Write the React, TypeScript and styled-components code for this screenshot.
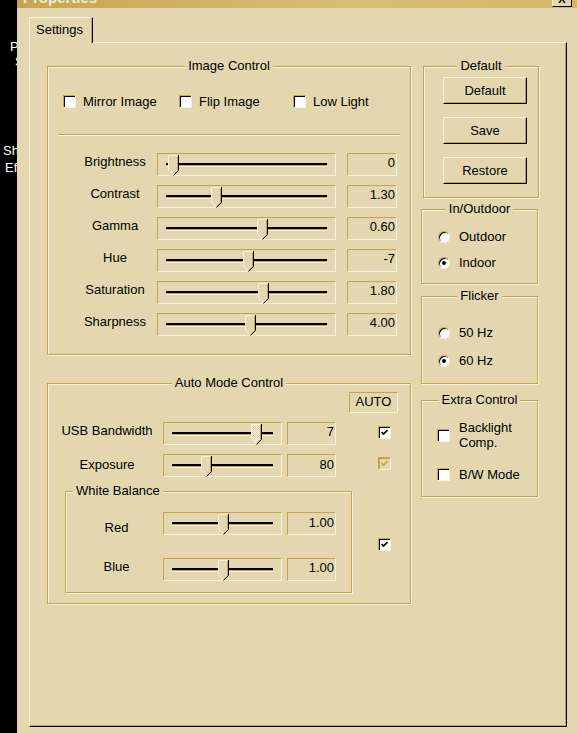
import styled, { createGlobalStyle } from 'styled-components';

const C = {
  face: '#E4D7B0',
  gold: '#C2A452',
  light: '#F8F1DC',
  dark: '#000000',
};

const GlobalStyle = createGlobalStyle`
  html, body {
    margin: 0;
    padding: 0;
    background: #000;
  }
  body {
    font-family: "Liberation Sans", Arial, sans-serif;
    font-size: 13px;
    line-height: 15px;
    color: #000;
    overflow: hidden;
  }
`;

const Screen = styled.div`
  display: flex;
  width: 577px;
  height: 733px;
  overflow: hidden;
  background: #000;
`;

const Desktop = styled.div`
  width: 17px;
  flex: none;
  overflow: hidden;
  padding-top: 39px;
  color: #fff;
  white-space: nowrap;
`;

const DesktopLabel = styled.div<{ $indent: number; $gap?: number }>`
  padding-left: ${(p) => p.$indent}px;
  margin-top: ${(p) => p.$gap ?? 0}px;
`;

const Window = styled.div`
  flex: 1;
  min-width: 0;
  display: flex;
  flex-direction: column;
  background: ${C.face};
`;

const TitleBar = styled.div`
  height: 8px;
  flex: none;
  display: flex;
  justify-content: space-between;
  overflow: hidden;
  background: linear-gradient(90deg, #c4a553, #d9bf74 60%, #d4b868);
`;

const TitleText = styled.div`
  margin: -10px 0 0 6px;
  font-weight: bold;
  font-size: 15px;
  line-height: 15px;
  color: #f4ecd2;
  white-space: nowrap;
`;

const CloseBox = styled.div`
  width: 20px;
  height: 7px;
  box-sizing: border-box;
  margin-right: 5px;
  background: ${C.face};
  border-left: 1px solid ${C.light};
  border-right: 1px solid #000;
  border-bottom: 1px solid #000;
  display: flex;
  justify-content: center;
  overflow: hidden;
  font-weight: bold;
  font-size: 11px;
  line-height: 11px;
`;

const CloseGlyph = styled.span`
  margin-top: -6px;
`;

const Body = styled.div`
  flex: 1;
  display: flex;
  flex-direction: column;
  padding: 9px 10px 6px 12px;
`;

const TabRow = styled.div`
  display: flex;
  position: relative;
  z-index: 1;
`;

const Tab = styled.div`
  width: 64px;
  height: 26px;
  box-sizing: border-box;
  margin-bottom: -1px;
  padding: 4px 0 0 6px;
  background: ${C.face};
  border-top: 1px solid ${C.light};
  border-left: 1px solid ${C.light};
  border-right: 1px solid #000;
  box-shadow: inset -1px 0 0 ${C.gold};
`;

const Panel = styled.div`
  flex: 1;
  box-sizing: border-box;
  border-top: 1px solid ${C.light};
  border-left: 1px solid ${C.light};
  border-right: 1px solid #000;
  border-bottom: 1px solid #000;
  box-shadow: inset -1px -1px 0 ${C.gold};
  padding: 23px 0 0 17px;
  display: flex;
  gap: 10px;
  align-items: flex-start;
`;

const Column = styled.div<{ $w: number }>`
  width: ${(p) => p.$w}px;
  display: flex;
  flex-direction: column;
`;

const Group = styled.div<{ $mt?: number; $ml?: number; $pad?: string; $w?: number }>`
  position: relative;
  box-sizing: border-box;
  ${(p) => (p.$w ? `width: ${p.$w}px;` : '')}
  margin-top: ${(p) => p.$mt ?? 0}px;
  margin-left: ${(p) => p.$ml ?? 0}px;
  padding: ${(p) => p.$pad ?? '0'};
  border: 1px solid ${C.gold};
  box-shadow: inset 1px 1px 0 ${C.light}, 1px 1px 0 ${C.light};
`;

const Legend = styled.span<{ $left?: boolean }>`
  position: absolute;
  top: -9px;
  ${(p) => (p.$left ? 'left: 7px;' : 'left: 0; right: 0; margin: 0 auto;')}
  width: fit-content;
  padding: 0 3px;
  background: ${C.face};
  white-space: nowrap;
`;

const CheckRow = styled.div`
  display: grid;
  grid-template-columns: 116px 114px auto;
  padding: 27px 0 0 15px;
`;

const CheckItem = styled.div`
  display: flex;
  align-items: center;
  gap: 7px;
`;

const Check = styled.span<{ $disabled?: boolean }>`
  width: 13px;
  height: 13px;
  box-sizing: border-box;
  flex: none;
  border: 1px solid;
  border-color: ${C.gold} ${C.light} ${C.light} ${C.gold};
  box-shadow: inset 1px 1px 0 ${(p) => (p.$disabled ? C.gold : '#000')};
  background: ${(p) => (p.$disabled ? C.face : '#fff')};
  display: flex;
  align-items: center;
  justify-content: center;
`;

const Radio = styled.span<{ $on?: boolean }>`
  width: 12px;
  height: 12px;
  box-sizing: border-box;
  flex: none;
  border-radius: 50%;
  border: 1px solid;
  border-color: ${C.gold} ${C.light} ${C.light} ${C.gold};
  box-shadow: inset 1px 1px 0 #000;
  background: #fff;
  display: flex;
  align-items: center;
  justify-content: center;

  &::after {
    content: '';
    width: 4px;
    height: 4px;
    border-radius: 50%;
    background: ${(p) => (p.$on ? '#000' : 'transparent')};
  }
`;

const Separator = styled.div`
  height: 1px;
  margin: 25px 10px 18px;
  background: ${C.gold};
  box-shadow: 0 1px 0 ${C.light};
`;

const Rows = styled.div<{ $gap: number; $pb: number }>`
  display: flex;
  flex-direction: column;
  gap: ${(p) => p.$gap}px;
  padding-bottom: ${(p) => p.$pb}px;
`;

const SliderRow = styled.div<{ $cols: string; $mt?: number }>`
  display: grid;
  grid-template-columns: ${(p) => p.$cols};
  column-gap: 5px;
  height: 23px;
  margin-top: ${(p) => p.$mt ?? 0}px;
`;

const ImageRow = styled(SliderRow)`
  column-gap: 0;
`;

const RowLabel = styled.div<{ $pl: number; $pt?: number }>`
  text-align: center;
  padding-left: ${(p) => p.$pl}px;
  padding-top: ${(p) => p.$pt ?? 1}px;
  white-space: nowrap;
`;

const SliderBox = styled.div`
  position: relative;
  box-sizing: border-box;
  height: 23px;
  border: 1px solid;
  border-color: ${C.gold} ${C.light} ${C.light} ${C.gold};
`;

const Track = styled.div`
  height: 4px;
  margin: 9px 8px 0;
  background: linear-gradient(#000 0 2px, ${C.gold} 2px 3px, ${C.light} 3px 4px);
`;

const Thumb = styled.div`
  position: absolute;
  top: 1px;
  width: 11px;
  height: 21px;
  line-height: 0;
`;

const ValueBox = styled.div<{ $ml?: number; $pt?: number }>`
  box-sizing: border-box;
  height: 23px;
  margin-left: ${(p) => p.$ml ?? 0}px;
  padding: ${(p) => p.$pt ?? 1}px 1px 0 0;
  text-align: right;
  border: 1px solid;
  border-color: ${C.gold} ${C.light} ${C.light} ${C.gold};
`;

const AutoHeader = styled.div`
  display: flex;
  justify-content: flex-end;
  padding: 8px 12px 0 0;
`;

const AutoTag = styled.div`
  width: 49px;
  height: 21px;
  box-sizing: border-box;
  padding-top: 1px;
  text-align: center;
  border: 1px solid;
  border-color: ${C.gold} ${C.light} ${C.light} ${C.gold};
`;

const CheckCell = styled.div<{ $pt?: number }>`
  padding: ${(p) => p.$pt ?? 4}px 0 0 37px;
`;

const WbSection = styled.div`
  display: flex;
  align-items: flex-start;
  margin-top: 14px;
  padding: 0 0 10px 17px;
`;

const WbCheck = styled.div`
  margin: 47px 0 0 26px;
`;

const ButtonStack = styled.div`
  display: flex;
  flex-direction: column;
  gap: 13px;
`;

const Button = styled.button`
  width: 84px;
  height: 27px;
  box-sizing: border-box;
  padding: 0;
  font: inherit;
  color: #000;
  background: ${C.face};
  border-top: 1px solid ${C.light};
  border-left: 1px solid ${C.light};
  border-right: 1px solid #000;
  border-bottom: 1px solid #000;
  box-shadow: inset -1px -1px 0 ${C.gold};
  display: flex;
  align-items: center;
  justify-content: center;
`;

const Option = styled.div<{ $gap?: number }>`
  display: flex;
  flex-direction: column;
  gap: ${(p) => p.$gap ?? 11}px;
`;

const OptionRow = styled.div`
  display: flex;
  align-items: center;
  gap: 9px;
  white-space: nowrap;
`;

const CheckMark = ({ color = '#000' }: { color?: string }) => (
  <svg width="7" height="7" viewBox="0 0 7 7">
    <path d="M0.5 3 L2.5 5 L6.5 1" stroke={color} strokeWidth="1.7" fill="none" />
  </svg>
);

const ThumbShape = ({ hatched }: { hatched?: boolean }) => (
  <svg width="11" height="21" viewBox="0 0 11 21">
    {hatched && (
      <defs>
        <pattern id="dither" width="2" height="2" patternUnits="userSpaceOnUse">
          <rect width="2" height="2" fill={C.face} />
          <rect width="1" height="1" fill={C.light} />
          <rect x="1" y="1" width="1" height="1" fill={C.light} />
        </pattern>
      </defs>
    )}
    <polygon points="0,0 10,0 10,15.5 5.5,20 0,15.5" fill={hatched ? 'url(#dither)' : C.face} />
    <polyline points="5,19.5 0.5,15 0.5,0.5 9.5,0.5" stroke={C.light} fill="none" />
    <polyline points="9.5,1 9.5,15.5 5.5,19.5" stroke={C.gold} fill="none" />
    <polyline points="10.5,0 10.5,15.5 5.5,20.5" stroke="#000" fill="none" />
  </svg>
);

function Slider({ pos, hatched }: { pos: number; hatched?: boolean }) {
  return (
    <SliderBox>
      <Track />
      <Thumb style={{ left: pos }}>
        <ThumbShape hatched={hatched} />
      </Thumb>
    </SliderBox>
  );
}

const imageSliders = [
  { label: 'Brightness', value: '0', pos: 10 },
  { label: 'Contrast', value: '1.30', pos: 53 },
  { label: 'Gamma', value: '0.60', pos: 99 },
  { label: 'Hue', value: '-7', pos: 85 },
  { label: 'Saturation', value: '1.80', pos: 100 },
  { label: 'Sharpness', value: '4.00', pos: 87 },
];

const IMAGE_COLS = '109px 179px 61px';
const AUTO_COLS = '110px 119px 49px 1fr';
const WB_COLS = '92px 119px 49px';

export default function App() {
  return (
    <>
      <GlobalStyle />
      <Screen>
        <Desktop>
          <DesktopLabel $indent={10}>Printers</DesktopLabel>
          <DesktopLabel $indent={15}>Scanners</DesktopLabel>
          <DesktopLabel $indent={3} $gap={74}>Show Desktop</DesktopLabel>
          <DesktopLabel $indent={5} $gap={2}>Effects</DesktopLabel>
        </Desktop>

        <Window>
          <TitleBar>
            <TitleText>Properties</TitleText>
            <CloseBox>
              <CloseGlyph>X</CloseGlyph>
            </CloseBox>
          </TitleBar>

          <Body>
            <TabRow>
              <Tab>Settings</Tab>
            </TabRow>

            <Panel>
              <Column $w={364}>
                <Group>
                  <Legend>Image Control</Legend>
                  <CheckRow>
                    <CheckItem>
                      <Check />
                      Mirror Image
                    </CheckItem>
                    <CheckItem>
                      <Check />
                      Flip Image
                    </CheckItem>
                    <CheckItem>
                      <Check />
                      Low Light
                    </CheckItem>
                  </CheckRow>
                  <Separator />
                  <Rows $gap={9} $pb={18}>
                    {imageSliders.map((s) => (
                      <ImageRow key={s.label} $cols={IMAGE_COLS}>
                        <RowLabel $pl={25}>{s.label}</RowLabel>
                        <Slider pos={s.pos} />
                        <ValueBox $ml={11}>{s.value}</ValueBox>
                      </ImageRow>
                    ))}
                  </Rows>
                </Group>

                <Group $mt={28}>
                  <Legend>Auto Mode Control</Legend>
                  <AutoHeader>
                    <AutoTag>AUTO</AutoTag>
                  </AutoHeader>
                  <SliderRow $cols={AUTO_COLS} $mt={9}>
                    <RowLabel $pl={8}>USB Bandwidth</RowLabel>
                    <Slider pos={87} hatched />
                    <ValueBox>7</ValueBox>
                    <CheckCell>
                      <Check>
                        <CheckMark />
                      </Check>
                    </CheckCell>
                  </SliderRow>
                  <SliderRow $cols={AUTO_COLS} $mt={9}>
                    <RowLabel $pl={8} $pt={3}>Exposure</RowLabel>
                    <Slider pos={37} />
                    <ValueBox $pt={2}>80</ValueBox>
                    <CheckCell $pt={3}>
                      <Check $disabled>
                        <CheckMark color={C.gold} />
                      </Check>
                    </CheckCell>
                  </SliderRow>
                  <WbSection>
                    <Group $w={287} $pad="0 0 11px 0">
                      <Legend $left>White Balance</Legend>
                      <SliderRow $cols={WB_COLS} $mt={20}>
                        <RowLabel $pl={9} $pt={8}>Red</RowLabel>
                        <Slider pos={54} />
                        <ValueBox $pt={2}>1.00</ValueBox>
                      </SliderRow>
                      <SliderRow $cols={WB_COLS} $mt={23}>
                        <RowLabel $pl={9}>Blue</RowLabel>
                        <Slider pos={54} />
                        <ValueBox>1.00</ValueBox>
                      </SliderRow>
                    </Group>
                    <WbCheck>
                      <Check>
                        <CheckMark />
                      </Check>
                    </WbCheck>
                  </WbSection>
                </Group>
              </Column>

              <Column $w={118}>
                <Group $pad="10px 0 13px 19px" $w={116} $ml={2}>
                  <Legend>Default</Legend>
                  <ButtonStack>
                    <Button>Default</Button>
                    <Button>Save</Button>
                    <Button>Restore</Button>
                  </ButtonStack>
                </Group>

                <Group $mt={11} $pad="19px 0 13px 16px" $w={117}>
                  <Legend>In/Outdoor</Legend>
                  <Option>
                    <OptionRow>
                      <Radio />
                      Outdoor
                    </OptionRow>
                    <OptionRow>
                      <Radio $on />
                      Indoor
                    </OptionRow>
                  </Option>
                </Group>

                <Group $mt={12} $pad="28px 0 15px 16px" $w={117}>
                  <Legend>Flicker</Legend>
                  <Option $gap={13}>
                    <OptionRow>
                      <Radio />
                      50 Hz
                    </OptionRow>
                    <OptionRow>
                      <Radio $on />
                      60 Hz
                    </OptionRow>
                  </Option>
                </Group>

                <Group $mt={16} $pad="19px 0 14px 15px" $w={117}>
                  <Legend>Extra Control</Legend>
                  <Option $gap={17}>
                    <OptionRow>
                      <Check />
                      <span>
                        Backlight
                        <br />
                        Comp.
                      </span>
                    </OptionRow>
                    <OptionRow>
                      <Check />
                      B/W Mode
                    </OptionRow>
                  </Option>
                </Group>
              </Column>
            </Panel>
          </Body>
        </Window>
      </Screen>
    </>
  );
}
